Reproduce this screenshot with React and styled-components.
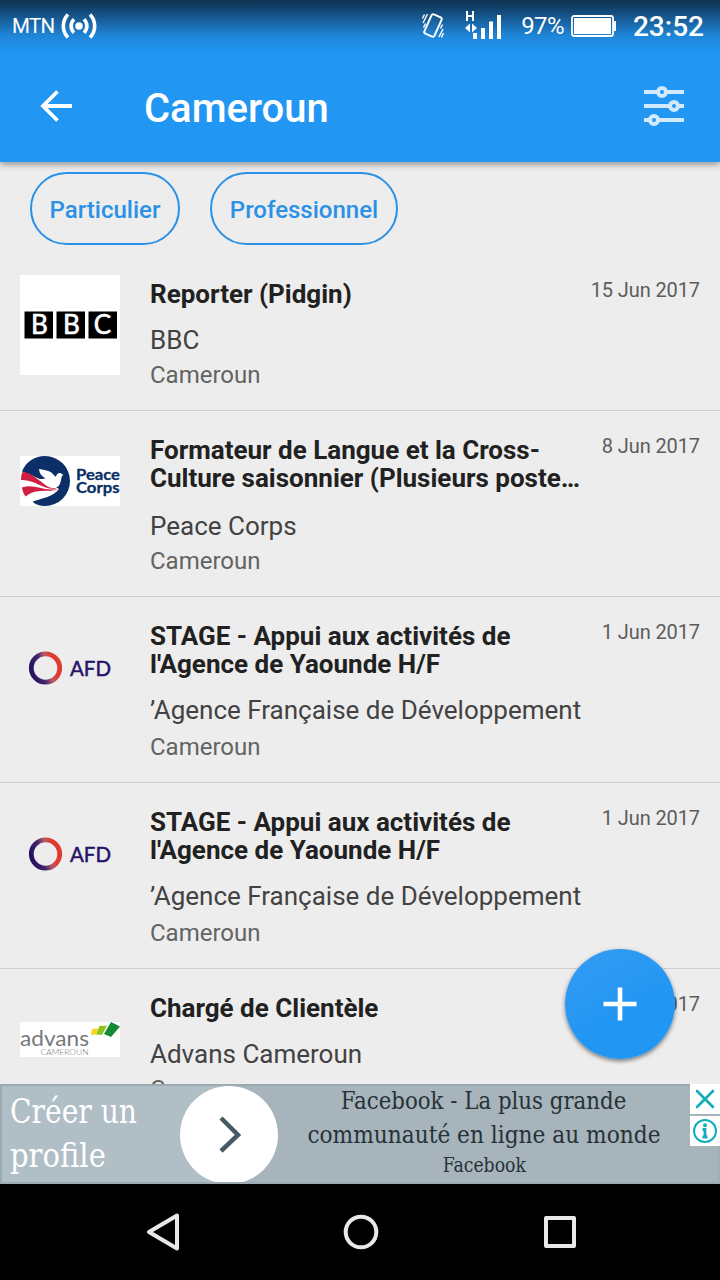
import React from "react";
import styled, { createGlobalStyle } from "styled-components";

const Global = createGlobalStyle`
  * { box-sizing: border-box; }
  body { margin: 0; background: #ededed; font-family: Roboto, "Liberation Sans", sans-serif; }
  svg { display: block; flex: none; overflow: visible; }
`;

const Screen = styled.div`
  position: relative;
  display: flex;
  flex-direction: column;
  width: 720px;
  height: 1280px;
  overflow: hidden;
  background: #ededed;
`;

const Header = styled.header`
  position: relative;
  z-index: 1;
  flex: none;
  height: 162px;
  background: linear-gradient(#0d3454 0, #10395c 4px, #185f9b 20px, #1f86d9 36px, #2196f3 52px);
  box-shadow: 0 2px 7px rgba(0, 0, 0, 0.42);
  color: #fff;
`;

const StatusBar = styled.div`
  display: flex;
  align-items: center;
  height: 50px;
  padding: 1px 16px 0 12px;
`;

const Carrier = styled.span`
  width: 43px;
  margin-right: 7px;
  font-size: 20.5px;
  letter-spacing: -0.7px;
`;

const StatusRight = styled.div`
  display: flex;
  align-items: center;
  margin-left: auto;
`;

const Percent = styled.span`
  margin: 0 7px 0 19px;
  font-size: 24px;
  letter-spacing: -0.6px;
`;

const Clock = styled.span`
  margin-left: 17px;
  padding-top: 2px;
  font-size: 28px;
  font-weight: 500;
`;

const Toolbar = styled.div`
  display: flex;
  align-items: center;
  height: 112px;
  padding: 0 36px 0 40px;
`;

const Heading = styled.h1`
  flex: 1;
  margin: 6px 0 0 72px;
  font-size: 40px;
  font-weight: 500;
  line-height: 48px;
`;

const Chips = styled.div`
  display: flex;
  flex: none;
  gap: 30px;
  height: 93px;
  padding: 10px 30px;
`;

const Chip = styled.button`
  width: ${(p) => p.$width}px;
  height: 73px;
  padding: 2px 0 0;
  border: 2px solid #2a91e6;
  border-radius: 37px;
  background: transparent;
  color: #2a91e6;
  font: 500 24px Roboto, sans-serif;
`;

const List = styled.main`
  flex: 1;
  min-height: 0;
  overflow: hidden;
`;

const Row = styled.article`
  display: flex;
  align-items: flex-start;
  height: ${(p) => 126 + 30 * p.$lines}px;
  padding: 20px 20px 0;
  border-bottom: 1px solid #cfcfcf;
`;

const LogoBox = styled.div`
  display: flex;
  flex: none;
  align-items: center;
  width: 100px;
  height: 100px;
  margin-right: 30px;
`;

const Details = styled.div`
  flex: 1;
  padding-top: 5px;
  white-space: nowrap;
`;

const JobTitle = styled.h2`
  height: ${(p) => 28 * p.$lines + (p.$lines - 1) * 2}px;
  margin: 0;
  color: #212121;
  font-size: 26px;
  font-weight: 700;
  line-height: 28px;
  white-space: pre-line;
`;

const Company = styled.div`
  margin: ${(p) => (p.$raised ? "12px 0 2px" : "14px 0 0")};
  color: #424242;
  font-size: 26px;
  line-height: 36px;
`;

const Place = styled.div`
  color: #636363;
  font-size: 24px;
  line-height: 34px;
`;

const DateLabel = styled.time`
  width: 0;
  display: flex;
  justify-content: flex-end;
  padding-top: 3px;
  color: #5c5c5c;
  font-size: 20px;
  line-height: 24px;
  letter-spacing: -0.1px;
  white-space: nowrap;
`;

const Fab = styled.button`
  position: absolute;
  z-index: 2;
  left: 565px;
  top: 949px;
  display: grid;
  place-items: center;
  width: 110px;
  height: 110px;
  padding: 0;
  border: 0;
  border-radius: 50%;
  background: linear-gradient(150deg, #359cf3, #2196f3 60%);
  box-shadow: 0 2px 4px rgba(0, 0, 0, 0.5);
`;

const Banner = styled.aside`
  position: relative;
  display: flex;
  flex: none;
  height: 100px;
  border: 2px solid #9ba9b0;
  border-right-color: #a1aeb5;
  background: linear-gradient(90deg, #b0bec5 227px, #a7b4bb 227px);
  font-family: "DejaVu Serif Condensed", "DejaVu Serif", serif;
  font-stretch: condensed;
  white-space: nowrap;
`;

const BannerCall = styled.div`
  width: 178px;
  padding: 3px 0 0 8px;
  color: #fff;
  font-size: 34px;
  line-height: 44px;
`;

const Squeeze = styled.span`
  display: block;
  transform: scaleX(${(p) => p.$by});
  transform-origin: ${(p) => p.$origin || "left"};
`;

const BannerArrow = styled.div`
  display: grid;
  flex: none;
  place-items: center;
  width: 98px;
  height: 96px;
  overflow: hidden;
`;

const BannerText = styled.div`
  display: flex;
  flex-direction: column;
  align-items: center;
  width: 412px;
  margin-top: -2px;
  color: #263238;
  font-size: 25px;
  line-height: 34px;
`;

const Advertiser = styled.div`
  padding-top: 1px;
  font-size: 20px;
  line-height: 25px;
`;

const AdControls = styled.div`
  position: absolute;
  right: -2px;
  top: -2px;
  display: flex;
  flex-direction: column;
  gap: 2px;
`;

const AdControl = styled.div`
  display: grid;
  place-items: center;
  width: 30px;
  height: 30px;
  background: #fff;
`;

const NavBar = styled.nav`
  display: flex;
  flex: none;
  align-items: center;
  justify-content: space-between;
  height: 96px;
  padding: 0 136px 0 138px;
  background: #000;
`;

const line = { fill: "none", stroke: "#fff" };

const Hotspot = () => (
  <svg width="34" height="26" viewBox="0 0 34 26" {...line} strokeWidth="3.6">
    <circle cx="17" cy="13" r="3.8" fill="#fff" stroke="none" />
    <path d="M12 6.200a9.500 9.500 0 0 0 0 13.600M22 6.200a9.500 9.500 0 0 1 0 13.600M6 1.500a16.500 16.500 0 0 0 0 23M28 1.500a16.500 16.500 0 0 1 0 23" />
  </svg>
);

const VibrateIcon = styled.svg`
  margin-right: 20px;
`;

const Vibrate = () => (
  <VibrateIcon width="24" height="28" viewBox="0 0 24 28" {...line}>
    <rect x="6.500" y="3" width="11" height="21" rx="1.800" transform="rotate(24 12 13.500)" strokeWidth="2" />
    <path d="M1.500 6.500l2-4M2 11l4.500-9M2.500 15.500l2-4M22 17l-4 8M22.500 21l-2 4.500M21.500 12.500l-2 4" strokeWidth="1.400" />
  </VibrateIcon>
);

const Signal = () => (
  <svg width="37" height="29" viewBox="0 0 37 29" fill="#fff">
    <path d="M1 0h2v4h4V0h2v10H7V6H3v4H1zM0 17l5-4.500v9zM12 17l-5-4.500v9zM8 22h4v6H8zM16 17h4v11h-4zM24 10.500h4V28h-4zM32 4h4v24h-4z" />
  </svg>
);

const Battery = () => (
  <svg width="45" height="22" viewBox="0 0 45 22">
    <rect x="1" y="1" width="41" height="20" rx="2" {...line} strokeWidth="1.800" />
    <path d="M3 3h37v16H3zM43 6h2v10h-2z" fill="#fff" />
  </svg>
);

const BackArrow = () => (
  <svg width="32" height="32" viewBox="0 0 32 32" {...line} strokeWidth="3.800">
    <path d="M32 16H3M17.500 1.500L3 16l14.500 14.500" />
  </svg>
);

const Filters = () => (
  <svg width="40" height="40" viewBox="0 0 40 40" fill="none" stroke="#d3eafd" strokeWidth="4">
    <path d="M0 6h13M23 6h17M0 20h25M35 20h5M0 34h5M15 34h25" />
    <circle cx="18" cy="6" r="4" />
    <circle cx="30" cy="20" r="4" />
    <circle cx="10" cy="34" r="4" />
  </svg>
);

const BbcLogo = () => (
  <svg width="100" height="100" viewBox="0 0 100 100">
    <path fill="#fff" d="M0 0h100v100H0z" />
    <path d="M4.500 36.500h28.500v27H4.500zM36.500 36.500h28.500v27H36.500zM68.500 36.500H97v27H68.500z" />
    <g fill="#fff" stroke="#fff" strokeWidth=".6" fontFamily="Lato" fontSize="26" textAnchor="middle">
      <text x="19.500" y="59.300">B</text>
      <text x="51.500" y="59.300">B</text>
      <text x="82.500" y="59.300">C</text>
    </g>
  </svg>
);

const PeaceCorpsLogo = () => (
  <svg width="100" height="50" viewBox="0 0 100 50">
    <path fill="#fff" d="M0 0h100v50H0z" />
    <path fill="#0b2f66" d="M2 15.500C6 5.500 15 0 25 0a25 25 0 0 1 0 50c-5 0-9-1.300-12.500-4.200C21 42 33 41.500 39 33L27 26z" />
    <path fill="#fff" d="M1.500 16.500C15 17 25 31 38 33c-7 7-18 5-28 13L3 39z" />
    <path fill="#cf1f42" d="M1 24c.1-3 .4-5.500 1.300-8C15 16.500 22 31 37 32.500 24 35 15 23 1 24zM2 31.500c12-4 21 4 36 1.500-9 4.500-21-2-32.500 7.500C3.500 37.500 2.500 35 2 31.500z" />
    <path fill="#fff" d="M19 13c4 1 9 1 12 3.200 2.500 1.800 3.500 4.300 5 4.300.8-2.300 2-3.800 4-3.500 1.600.2 2 1.500 3.500 2-1.700.5-2 2.300-2.500 5-.8 5-3 8-7.500 8C27 32 23.500 27 18 23c3 0 5.500 0 7.500-.8C22 20.500 19.500 18 19 13z" />
    <g fill="#0b2f66" stroke="#0b2f66" strokeWidth=".3" fontFamily="Lato" fontWeight="700" fontSize="14.500">
      <text x="56" y="24" textLength="44" lengthAdjust="spacingAndGlyphs">Peace</text>
      <text x="56" y="37" textLength="43.500" lengthAdjust="spacingAndGlyphs">Corps</text>
    </g>
  </svg>
);

const AfdLogo = () => (
  <svg width="100" height="42" viewBox="0 0 100 42">
    <defs>
      <linearGradient id="afdRing" x1="0" y1=".65" x2="1" y2=".35">
        <stop offset="0" stopColor="#27115f" />
        <stop offset=".35" stopColor="#40266e" />
        <stop offset=".6" stopColor="#b75b63" />
        <stop offset=".8" stopColor="#e03a31" />
      </linearGradient>
    </defs>
    <circle cx="25.500" cy="22" r="14.200" fill="none" stroke="url(#afdRing)" strokeWidth="4.800" />
    <text x="50" y="29.500" fill="#27136a" stroke="#27136a" strokeWidth=".5" fontFamily="Lato" fontSize="21" textLength="41" lengthAdjust="spacingAndGlyphs">AFD</text>
  </svg>
);

const AdvansLogo = () => (
  <svg width="100" height="35" viewBox="0 0 100 35">
    <path fill="#fff" d="M0 0h100v35H0z" />
    <text x="0" y="24" fill="#77787b" fontFamily="Lato" fontSize="22" textLength="69" lengthAdjust="spacingAndGlyphs">advans</text>
    <text x="20.500" y="33" fill="#777" fontFamily="Lato" fontWeight="300" fontSize="8.500" textLength="48" lengthAdjust="spacingAndGlyphs">CAMEROUN</text>
    <path fill="#f5d81c" d="M72 7l6-.5-2 6-5 .5z" />
    <path fill="#8dc51c" d="M79.500 4l7.500-.5-5 9.500-6-.5z" />
    <path fill="#138a36" d="M91 0l9 4.500L91 15l-7-3z" />
  </svg>
);

const jobs = [
  { title: "Reporter (Pidgin)", lines: 1, company: "BBC", date: "15 Jun 2017", Logo: BbcLogo },
  { title: "Formateur de Langue et la Cross-\nCulture saisonnier (Plusieurs poste…", lines: 2, company: "Peace Corps", date: "8 Jun 2017", Logo: PeaceCorpsLogo },
  { title: "STAGE - Appui aux activités de\nl'Agence de Yaounde H/F", lines: 2, company: "’Agence Française de Développement", raised: true, date: "1 Jun 2017", Logo: AfdLogo },
  { title: "STAGE - Appui aux activités de\nl'Agence de Yaounde H/F", lines: 2, company: "’Agence Française de Développement", raised: true, date: "1 Jun 2017", Logo: AfdLogo },
  { title: "Chargé de Clientèle", lines: 1, company: "Advans Cameroun", date: "1 Jun 2017", Logo: AdvansLogo },
];

export default function App() {
  return (
    <Screen>
      <Global />
      <Header>
        <StatusBar>
          <Carrier>MTN</Carrier>
          <Hotspot />
          <StatusRight>
            <Vibrate />
            <Signal />
            <Percent>97%</Percent>
            <Battery />
            <Clock>23:52</Clock>
          </StatusRight>
        </StatusBar>
        <Toolbar>
          <BackArrow />
          <Heading>Cameroun</Heading>
          <Filters />
        </Toolbar>
      </Header>
      <Chips>
        <Chip $width={150}>Particulier</Chip>
        <Chip $width={188}>Professionnel</Chip>
      </Chips>
      <List>
        {jobs.map(({ title, lines, company, raised, date, Logo }, i) => (
          <Row key={i} $lines={lines}>
            <LogoBox><Logo /></LogoBox>
            <Details>
              <JobTitle $lines={lines}>{title}</JobTitle>
              <Company $raised={raised}>{company}</Company>
              <Place>Cameroun</Place>
            </Details>
            <DateLabel>{date}</DateLabel>
          </Row>
        ))}
      </List>
      <Fab aria-label="Ajouter">
        <svg width="34" height="34" viewBox="0 0 34 34" {...line} strokeWidth="4.600">
          <path d="M17 .5v33M.5 17h33" />
        </svg>
      </Fab>
      <Banner>
        <BannerCall>
          <Squeeze $by={0.92}>Créer un</Squeeze>
          <Squeeze $by={0.95}>profile</Squeeze>
        </BannerCall>
        <BannerArrow>
          <svg width="98" height="98" viewBox="0 0 98 98">
            <circle cx="49" cy="49" r="49" fill="#fff" />
            <path d="M41 32l17 17-17 16" fill="none" stroke="#455a64" strokeWidth="4.500" />
          </svg>
        </BannerArrow>
        <BannerText>
          <Squeeze $by={0.948} $origin="center">Facebook - La plus grande</Squeeze>
          <Squeeze $by={0.965} $origin="center">communauté en ligne au monde</Squeeze>
          <Advertiser><Squeeze $by={0.96} $origin="center">Facebook</Squeeze></Advertiser>
        </BannerText>
        <AdControls>
          <AdControl>
            <svg width="18" height="18" viewBox="0 0 18 18" stroke="#12acbf" strokeWidth="2.600" strokeLinecap="round">
              <path d="M1 1l16 16M17 1L1 17" />
            </svg>
          </AdControl>
          <AdControl>
            <svg width="24" height="24" viewBox="0 0 24 24" fill="none" stroke="#12acbf" strokeWidth="2">
              <circle cx="12" cy="12" r="11" />
              <path d="M9.500 10.500H12V18M9.500 18h5" strokeWidth="2.800" />
              <circle cx="12" cy="6.300" r="2" fill="#12acbf" stroke="none" />
            </svg>
          </AdControl>
        </AdControls>
      </Banner>
      <NavBar>
        <svg width="48" height="48" viewBox="0 0 48 48" fill="none" stroke="#e9e9e9" strokeWidth="4" strokeLinejoin="round">
          <path d="M39 7.500v33L11 24z" />
        </svg>
        <svg width="48" height="48" viewBox="0 0 48 48" fill="none" stroke="#e9e9e9" strokeWidth="4">
          <circle cx="24" cy="24" r="15.300" />
        </svg>
        <svg width="48" height="48" viewBox="0 0 48 48" fill="none" stroke="#e9e9e9" strokeWidth="4" strokeLinejoin="round">
          <path d="M10 10h28v28H10z" />
        </svg>
      </NavBar>
    </Screen>
  );
}
